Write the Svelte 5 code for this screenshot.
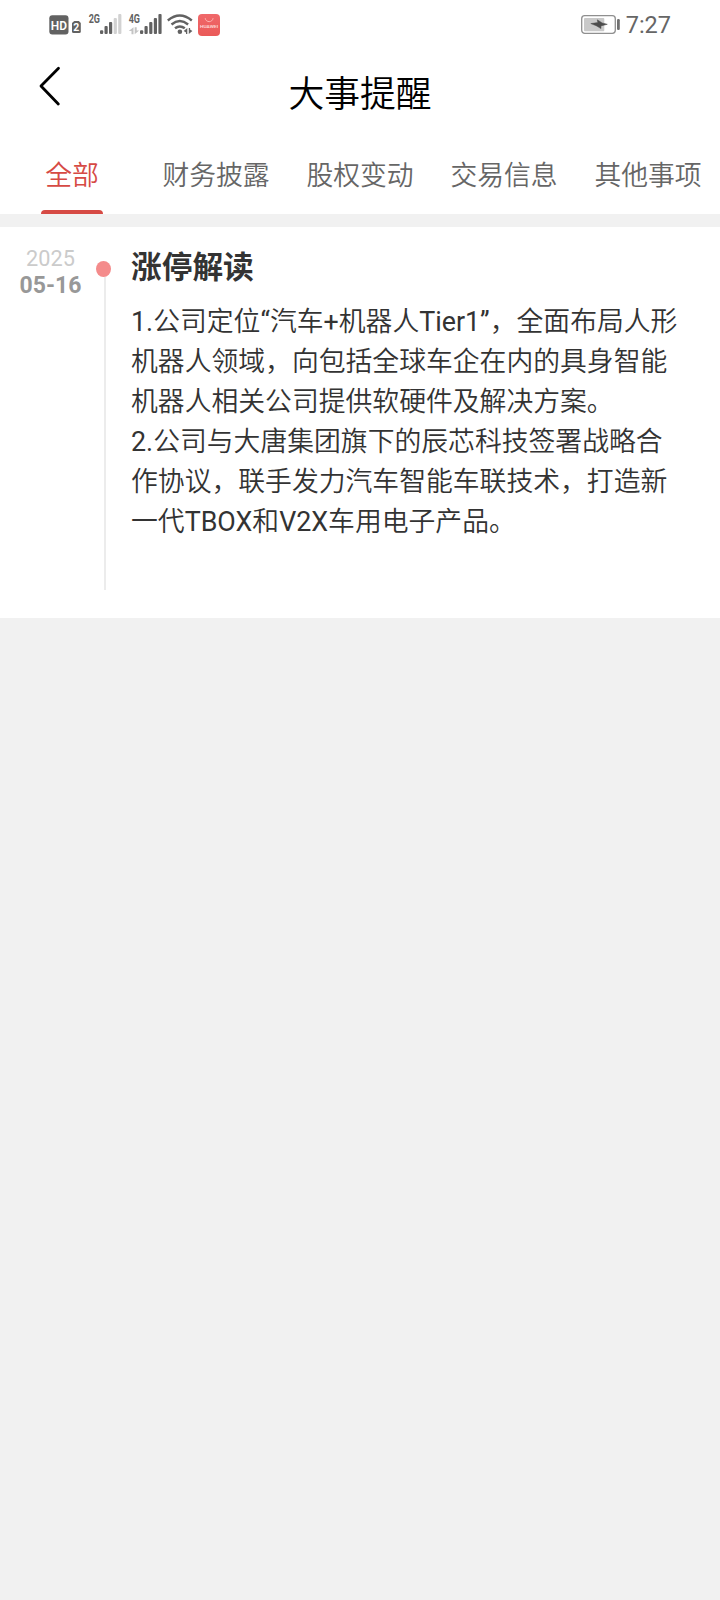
<script>
  const tabs = ['全部', '财务披露', '股权变动', '交易信息', '其他事项'];
  let active = $state(0);
  const lines = [
    '1.公司定位“汽车+机器人Tier1”，全面布局人形',
    '机器人领域，向包括全球车企在内的具身智能',
    '机器人相关公司提供软硬件及解决方案。',
    '2.公司与大唐集团旗下的辰芯科技签署战略合',
    '作协议，联手发力汽车智能车联技术，打造新',
    '一代TBOX和V2X车用电子产品。'
  ];
  // Latin runs are set in a regular weight, Chinese runs a step lighter.
  const latin = /([A-Za-z0-9.+“”]+)/;
  const runs = (line) => line.split(latin).filter(Boolean);
</script>

<div class="screen">
  <div class="status">
    <svg class="signals" width="180" height="50" viewBox="0 0 180 50">
      <rect x="9.300" y="15.300" width="19.200" height="19.200" rx="3" fill="#626262" />
      <text x="10.800" y="29.700" font-size="13.500" font-weight="600" fill="#fff" textLength="16.200" lengthAdjust="spacingAndGlyphs">HD</text>
      <path d="M34.300 21h4.500l2 2V31.500q0 1.500-1.500 1.500h-5.800q-1.500 0-1.500-1.500V23z" fill="#626262" />
      <text x="33.300" y="31" font-size="11" font-weight="700" fill="#fff" textLength="6" lengthAdjust="spacingAndGlyphs">2</text>
      <text x="48.700" y="23.200" font-size="13.300" font-weight="700" fill="#626262" textLength="11.300" lengthAdjust="spacingAndGlyphs">2G</text>
      <g fill="#626262">
        <rect x="60" y="30.300" width="3.200" height="3.700" rx="1" />
        <rect x="64.500" y="26" width="3.200" height="8" rx="1" />
        <rect x="69" y="22" width="3.200" height="12" rx="1" />
      </g>
      <g fill="#d2d2d2">
        <rect x="73.700" y="18" width="3.200" height="16" rx="1" />
        <rect x="78.200" y="14" width="3.200" height="20" rx="1" />
      </g>
      <text x="88.700" y="23.200" font-size="13.300" font-weight="700" fill="#626262" textLength="11.300" lengthAdjust="spacingAndGlyphs">4G</text>
      <path d="M93.500 27.200v7h-2v-3.200h-2.800zM94.700 34.200v-7h2v3.200h2.400z" fill="#c4c4c4" />
      <g fill="#626262">
        <rect x="100" y="30.300" width="3.200" height="3.700" rx="1" />
        <rect x="104.500" y="26" width="3.200" height="8" rx="1" />
        <rect x="109.200" y="22" width="3.200" height="12" rx="1" />
        <rect x="113.800" y="18" width="3.200" height="16" rx="1" />
        <rect x="118.400" y="14" width="3.200" height="20" rx="1" />
      </g>
      <g fill="none" stroke="#626262" stroke-width="2.400">
        <path d="M127.800 20.500q12-9.800 24 0" />
        <path d="M131.500 24.500q8.300-6.800 16.600 0" />
        <path d="M135 28.300q4.900-3.800 9.800 0" />
      </g>
      <circle cx="139.900" cy="31.800" r="2.300" fill="#626262" />
      <path d="M147.300 28v6h-1.300v-1.500l-2.300-1.500zM148.800 34v-6h1.300v1.500l2.300 1.500z" fill="#626262" />
      <defs>
        <linearGradient id="red" x1="0" y1="0" x2="0" y2="1">
          <stop offset="0" stop-color="#f0686a" />
          <stop offset="1" stop-color="#ea5a58" />
        </linearGradient>
      </defs>
      <rect x="158" y="14" width="22" height="22" rx="4" fill="url(#red)" />
      <path d="M165.200 18.200c.7 4.600 7.200 4.600 7.900 0" fill="none" stroke="#ffb5b2" stroke-width="1" />
      <text x="160" y="28.300" font-size="4.300" font-weight="500" fill="#ffe2e0" textLength="18" lengthAdjust="spacingAndGlyphs">HUAWEI</text>
    </svg>
    <div class="power">
      <svg width="41" height="50" viewBox="0 0 41 50">
        <rect x="1.700" y="15.700" width="33.600" height="17.600" rx="3" fill="none" stroke="#8f8f8f" stroke-width="1.300" />
        <rect x="4" y="18" width="20.300" height="13.200" rx="1" fill="#c9c9c9" />
        <path d="M10.800 23.600L17.800 22.600 17.300 19.800 22.200 22.900 27.300 24.300 20.900 25.900 21 28.600 16.200 25.700z" fill="#4c4c4c" stroke="#4c4c4c" stroke-width=".5" />
        <rect x="37" y="19" width="2.800" height="11" rx="1.200" fill="#707070" />
      </svg>
      <span>7:27</span>
    </div>
  </div>

  <header>
    <button class="back" aria-label="返回">
      <svg width="24" height="42" viewBox="0 0 24 42" fill="none" stroke="#000" stroke-width="2.800" stroke-linecap="round" stroke-linejoin="round">
        <path d="M20.500 3.200L3 21 20.300 39" />
      </svg>
    </button>
    <h1>大事提醒</h1>
  </header>

  <nav>
    {#each tabs as tab, i}
      <button class="tab" class:active={active === i} onclick={() => (active = i)}>{tab}</button>
    {/each}
  </nav>

  <main>
    <div class="date">
      <span class="year">2025</span>
      <span class="day">05-16</span>
    </div>
    <div class="rail"><i class="dot"></i><i class="line"></i></div>
    <article>
      <h2>涨停解读</h2>
      <div class="copy">
        {#each lines as line}
          <p>{#each runs(line) as run}<span class:latin={latin.test(run)}>{run}</span>{/each}</p>
        {/each}
      </div>
    </article>
  </main>
</div>

<style>
  :global(body) { margin: 0; background: #f1f1f1; }
  .screen {
    width: 720px;
    min-height: 1600px;
    background: #f1f1f1;
    font-family: Roboto, "Noto Sans CJK SC", sans-serif;
  }
  button { border: 0; padding: 0; background: none; font: inherit; }
  .status {
    display: flex;
    justify-content: space-between;
    height: 50px;
    padding: 0 49px 0 40px;
    background: #fff;
  }
  svg { display: block; flex: none; }
  .power { display: flex; color: #666; font-size: 23.500px; line-height: 50px; }
  .power span { margin-left: 5px; }
  header {
    display: grid;
    grid-template-columns: 100px 1fr 100px;
    height: 85px;
    background: #fff;
  }
  .back { align-self: start; justify-self: start; margin: 15px 0 0 38px; }
  h1 {
    margin: 0;
    text-align: center;
    font-size: 35.800px;
    font-weight: 350;
    line-height: 90px;
    color: #000;
  }
  nav { display: grid; grid-template-columns: repeat(5, 1fr); height: 79px; background: #fff; }
  .tab {
    display: flex;
    flex-direction: column;
    align-items: center;
    justify-content: space-between;
    color: #666;
    font-size: 26.800px;
    font-weight: 350;
    line-height: 82px;
    height: 79px;
    white-space: nowrap;
  }
  .tab.active { color: #d64a44; }
  .tab.active::after {
    content: '';
    width: 62px;
    height: 4px;
    margin-top: -7px;
    border-radius: 4px 4px 0 0;
    background: #d64a44;
  }
  main {
    display: grid;
    grid-template-columns: 96px 35px 1fr;
    height: 391px;
    margin-top: 13px;
    background: #fff;
  }
  .date {
    display: flex;
    flex-direction: column;
    align-items: center;
    padding: 19px 0 0 5px;
    line-height: 26px;
  }
  .year { font-size: 21.700px; color: #cbcbcb; }
  .day { font-size: 23px; line-height: 27px; font-weight: 700; color: #989898; }
  .rail { display: flex; flex-direction: column; height: 363px; padding-top: 34px; box-sizing: border-box; }
  .dot { flex: none; width: 15px; height: 16px; border-radius: 50%; background: #f48b8b; }
  .line { flex: 1; width: 2px; margin-left: 8px; background: #ececec; }
  h2 {
    margin: 21px 0 0;
    font-size: 30.700px;
    line-height: 40px;
    font-weight: 700;
    color: #333;
  }
  .copy { margin-top: 14px; }
  p { margin: 0; font-size: 26.820px; font-weight: 350; line-height: 40px; color: #333; white-space: nowrap; }
  .latin { font-weight: 400; }
</style>
